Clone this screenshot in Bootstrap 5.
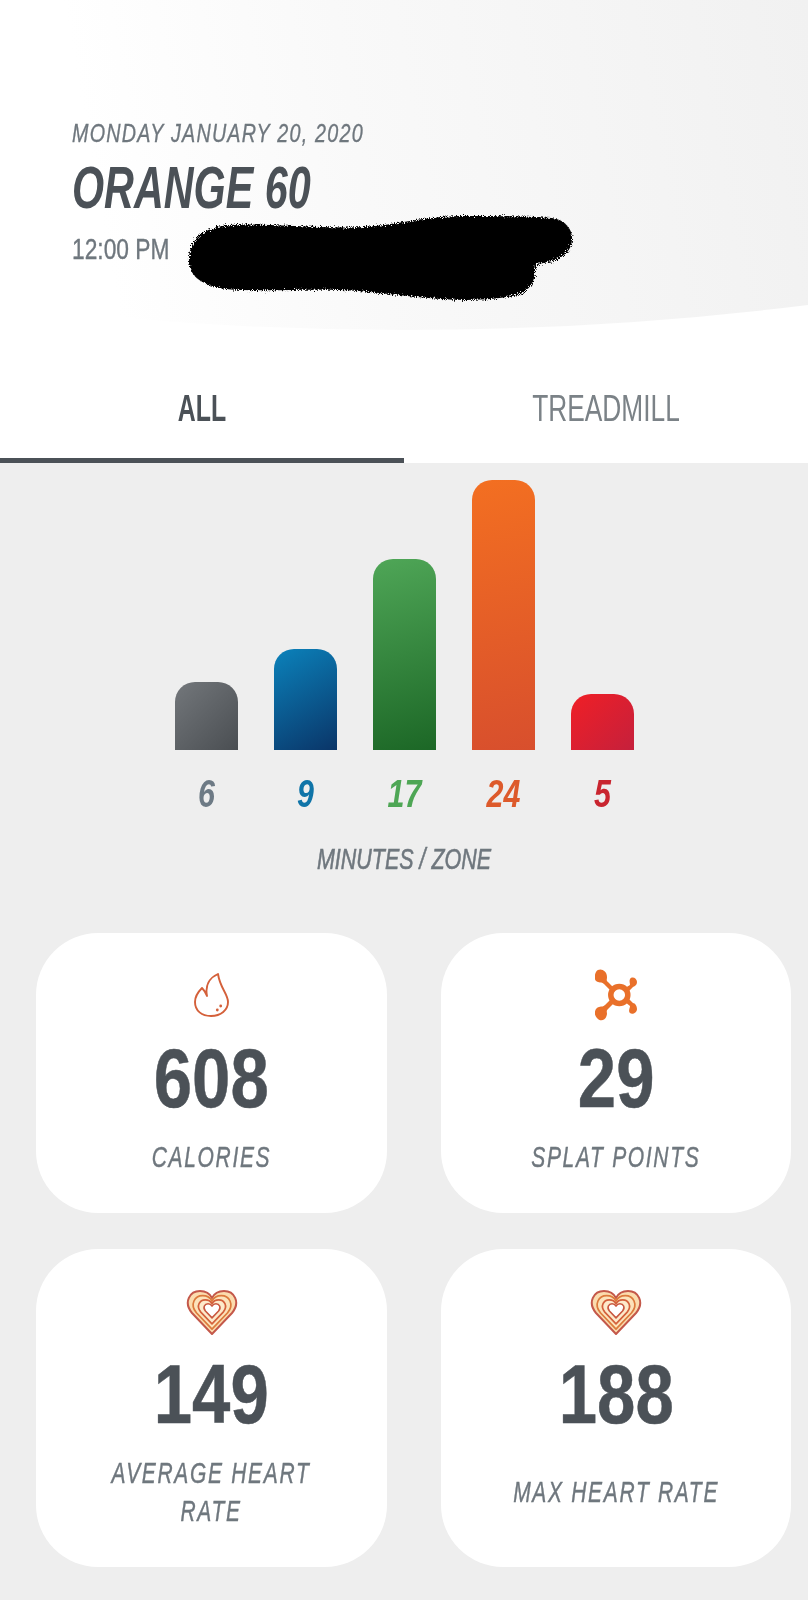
<!DOCTYPE html>
<html lang="en"><head><meta charset="utf-8"><title>Orange 60</title>
<link href="https://cdn.jsdelivr.net/npm/bootstrap@5.3.0/dist/css/bootstrap.min.css" rel="stylesheet">
<style>
body{background:#eee;font-family:"Liberation Sans",Arial,sans-serif;color:#4b5157;margin:0}
.hero{height:330px;clip-path:path('M0 0H808V305Q404 355 0 305Z');background:linear-gradient(80deg,#fff 14%,#f9f9f9 45%,#f1f1f1 100%);padding:118px 0 0 72px;position:relative}
.hero-date,.hero-title,.hero-time{transform-origin:0 50%}
.hero-date{font-size:26px;line-height:30px;font-style:italic;letter-spacing:1.6px;color:#6f777e;transform:scaleX(.76);-webkit-text-stroke:.35px #6f777e}
.hero-title{font-size:59px;line-height:64px;font-style:italic;font-weight:700;margin-top:8px;color:#4b5157;transform:scaleX(.7)}
.hero-time{font-size:29px;line-height:34px;color:#6f777e;margin-top:12px;transform:scaleX(.785);-webkit-text-stroke:.35px #6f777e}
.scribble{position:absolute;left:180px;top:205px}
.tabbar{height:133px}
.tabbar .nav-link{height:133px;display:flex;align-items:center;justify-content:center;padding:30px 0 0;font-size:36px;color:#7b8287;border-radius:0;border-bottom:5px solid transparent}
.tabbar .nav-link span{display:inline-block;transform:scaleX(.73)}
.tabbar .nav-link.active{font-weight:700;color:#4b5157;border-bottom-color:#4b5157}
.tabbar .nav-link.active span{transform:scaleX(.69)}
.chart{padding:17px 0 0 175px;gap:36px}
.zone{width:63px}
.pillar{border-radius:20px 20px 0 0;margin-top:auto}
.plot{height:270px}
.zone-num{font-size:39px;line-height:44px;font-style:italic;font-weight:700;margin-top:22px;transform:scaleX(.78)}
.caption{font-size:29px;line-height:34px;font-style:italic;color:#6f777e;margin-top:26px;transform:scaleX(.74);-webkit-text-stroke:.6px #6f777e}
.stats{display:grid;grid-template-columns:351px 350px;column-gap:54px;row-gap:36px;padding:57px 0 0 36px}
.tile{border-radius:62px;border:0;height:280px}
.tile.tall{height:318px}
.tile-icon{height:58px;margin-top:33px}
.tile.tall .tile-icon{margin-top:37px;height:52px}
.tile-num{font-size:83px;line-height:70px;font-weight:700;margin-top:20px;color:#4b5157;transform:scaleX(.83);-webkit-text-stroke:.5px #4b5157}
.tile.tall .tile-num{margin-top:22px}
.tile-label{font-size:30px;line-height:38px;font-style:italic;letter-spacing:2.4px;color:#6f777e;padding-bottom:13px;-webkit-text-stroke:.45px #6f777e}
.tile-label span{display:inline-block;transform:scaleX(.7)}
.g1{background:linear-gradient(135deg,#73777b,#4a4e52)}
.g2{background:linear-gradient(150deg,#0b82bb,#0a3568)}
.g3{background:linear-gradient(165deg,#4fa657,#1c6726)}
.g4{background:linear-gradient(170deg,#f36f21,#d84f2d)}
.g5{background:linear-gradient(135deg,#f01f26,#c5203c)}
.c1{color:#6d7a85}.c2{color:#0f74a8}.c3{color:#4ea655}.c4{color:#dd5a2b}.c5{color:#c9252f}
</style></head>
<body>
<div class="bg-white">
  <div class="hero">
    <div class="hero-date">MONDAY JANUARY 20, 2020</div>
    <div class="hero-title">ORANGE 60</div>
    <div class="hero-time">12:00 PM</div>
    <svg class="scribble" width="400" height="105" viewBox="180 205 400 105" aria-hidden="true">
      <defs><filter id="rough" x="-5%" y="-15%" width="110%" height="130%"><feTurbulence type="fractalNoise" baseFrequency="0.9" numOctaves="2" seed="4"/><feDisplacementMap in="SourceGraphic" scale="7"/><feGaussianBlur stdDeviation=".5"/></filter></defs>
      <path filter="url(#rough)" fill="#000" d="M189 258C190 238 205 227 230 225C265 223 320 229 365 227C395 225 425 216 465 216C495 216 530 216 552 218C566 220 573 230 572 240C571 254 558 262 536 264C535 275 535 287 520 294C500 300 470 301 440 299C400 296 370 291 340 290C300 289 260 292 225 289C200 285 188 275 189 258Z"/>
    </svg>
  </div>
  <ul class="nav nav-justified tabbar">
    <li class="nav-item"><a class="nav-link active" href="#"><span>ALL</span></a></li>
    <li class="nav-item"><a class="nav-link" href="#"><span>TREADMILL</span></a></li>
  </ul>
</div>
<div class="d-flex chart">
  <div class="zone text-center"><div class="plot d-flex"><div class="pillar g1 w-100" style="height:68px"></div></div><div class="zone-num c1">6</div></div>
  <div class="zone text-center"><div class="plot d-flex"><div class="pillar g2 w-100" style="height:101px"></div></div><div class="zone-num c2">9</div></div>
  <div class="zone text-center"><div class="plot d-flex"><div class="pillar g3 w-100" style="height:191px"></div></div><div class="zone-num c3">17</div></div>
  <div class="zone text-center"><div class="plot d-flex"><div class="pillar g4 w-100" style="height:270px"></div></div><div class="zone-num c4">24</div></div>
  <div class="zone text-center"><div class="plot d-flex"><div class="pillar g5 w-100" style="height:56px"></div></div><div class="zone-num c5">5</div></div>
</div>
<div class="caption text-center">MINUTES / ZONE</div>
<svg width="0" height="0" class="d-block" aria-hidden="true"><defs>
  <path id="hrt" d="M26 46L6 25C-3 14 4 3 14 3C20 3 24 6 26 10C28 6 32 3 38 3C48 3 55 14 46 25Z"/>
  <g id="hearts" stroke-linejoin="round">
    <use href="#hrt" fill="#fbdcae" stroke="#c4584a" stroke-width="2"/>
    <use href="#hrt" fill="#fce3bb" stroke="#dc7a3c" stroke-width="2.2" transform="translate(26 24) scale(.78) translate(-26 -24)"/>
    <use href="#hrt" fill="#fdeacb" stroke="#d4603c" stroke-width="3" transform="translate(26 23) scale(.56) translate(-26 -23)"/>
    <use href="#hrt" fill="#fff" stroke="#c9573f" stroke-width="4.8" transform="translate(26 22) scale(.33) translate(-26 -22)"/>
  </g>
</defs></svg>
<div class="stats">
  <div class="card tile text-center align-items-center">
    <div class="tile-icon d-flex align-items-center justify-content-center">
      <svg width="35" height="44" viewBox="25 23 35 44" aria-hidden="true"><path fill="none" stroke="#d4603a" stroke-width="1.9" stroke-linejoin="round" d="M49 24C40 28 36 36 38 46C37 43 35 40 33 38C28 43 26 48 26 52C26 61 33 66 42 66C52 66 59 60 59 52C59 44 51 38 49 24Z"/><circle cx="51.7" cy="56" r="1.4" fill="#d4603a"/><circle cx="48.3" cy="60" r="1.4" fill="#d4603a"/></svg>
    </div>
    <div class="tile-num">608</div>
    <div class="tile-label flex-grow-1 d-flex align-items-center"><span>CALORIES</span></div>
  </div>
  <div class="card tile text-center align-items-center">
    <div class="tile-icon d-flex align-items-center justify-content-center">
      <svg width="42" height="54" viewBox="25 17 42 54" aria-hidden="true"><g fill="#e9702a"><circle cx="49.3" cy="44" r="8.5" fill="none" stroke="#e9702a" stroke-width="5.5"/><path d="M26 21C29 16 37 19 37 26C37 29 36 29 38 31L44 37L41 40L34 33C32 31 31 32 28 31C24 30 24 25 26 21Z"/><path d="M27 67C23 63 25 57 29 56C32 55 33 56 35 54L41 48L44 52L38 58C36 60 37 61 37 63C36 70 30 71 27 67Z"/><path d="M60 28C62 25 67 27 67 31C67 34 65 35 63 36L58 41L55 37L60 34C60 32 59 30 60 28Z"/><path d="M60 62C58 60 60 57 60 55L55 51L58 47L63 52C65 52 67 55 67 58C67 62 62 64 60 62Z"/></g></svg>
    </div>
    <div class="tile-num">29</div>
    <div class="tile-label flex-grow-1 d-flex align-items-center"><span>SPLAT POINTS</span></div>
  </div>
  <div class="card tile tall text-center align-items-center">
    <div class="tile-icon d-flex align-items-center justify-content-center"><svg width="52" height="48" viewBox="0 0 52 48" aria-hidden="true"><use href="#hearts"/></svg></div>
    <div class="tile-num">149</div>
    <div class="tile-label flex-grow-1 d-flex align-items-center"><span>AVERAGE HEART<br>RATE</span></div>
  </div>
  <div class="card tile tall text-center align-items-center">
    <div class="tile-icon d-flex align-items-center justify-content-center"><svg width="52" height="48" viewBox="0 0 52 48" aria-hidden="true"><use href="#hearts"/></svg></div>
    <div class="tile-num">188</div>
    <div class="tile-label flex-grow-1 d-flex align-items-center"><span>MAX HEART RATE</span></div>
  </div>
</div>
<script src="https://cdn.jsdelivr.net/npm/bootstrap@5.3.0/dist/js/bootstrap.bundle.min.js"></script>
</body></html>
